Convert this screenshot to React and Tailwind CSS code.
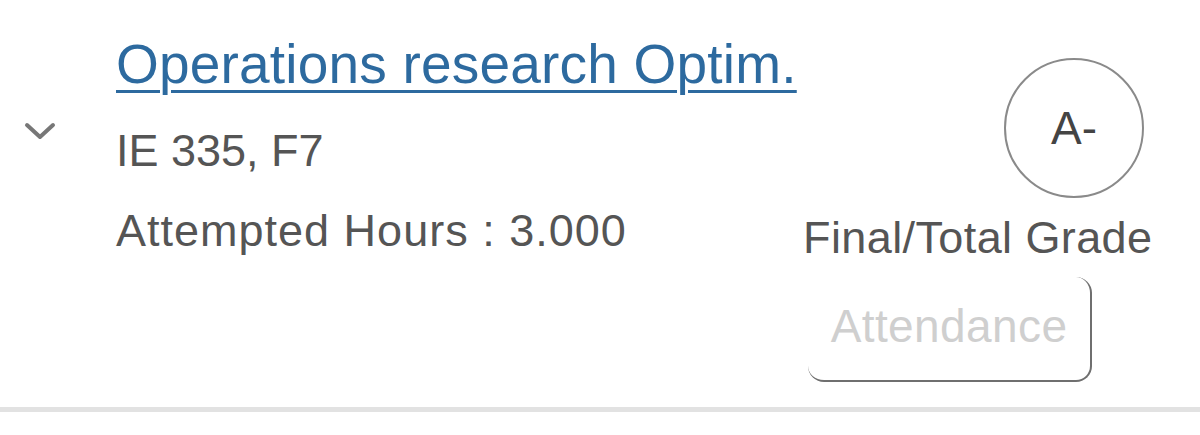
import React from 'react';

const font = { fontFamily: '"Liberation Sans", Arial, Helvetica, sans-serif' };

function Chevron() {
  return (
    <svg width="32" height="18" viewBox="0 0 32 18" className="ml-[24px] mt-[122px]">
      <polyline
        points="3,3 16,15 29,3"
        fill="none"
        stroke="#777777"
        strokeWidth="4"
        strokeLinecap="round"
        strokeLinejoin="round"
      />
    </svg>
  );
}

export default function App() {
  return (
    <div className="w-[1200px] h-[435px] bg-white overflow-hidden" style={font}>
      <div className="flex items-start h-[407px]">
        {/* expand toggle */}
        <div className="w-[116px] shrink-0">
          <Chevron />
        </div>

        {/* course info */}
        <div className="flex-1 mt-[32px] whitespace-nowrap">
          <a href="#" className="block text-[55px] leading-[64px] tracking-[0.2px] text-[#2d6a9f] underline decoration-[3px] underline-offset-[7px]">
            Operations research Optim.
          </a>
          <div className="mt-[25px] text-[45px] leading-[60px] text-[#555555]">IE 335, F7</div>
          <div className="mt-[20px] text-[45px] leading-[60px] tracking-[1px] text-[#555555]">Attempted Hours : 3.000</div>
        </div>

        {/* grade + attendance */}
        <div className="w-[349px] shrink-0 mr-[48px] mt-[58px] flex flex-col items-start whitespace-nowrap">
          <div className="ml-[201px] w-[140px] h-[140px] rounded-full border-2 border-[#8a8a8a] flex items-center justify-center text-[46px] leading-none text-[#444444]">
            A-
          </div>
          <div className="mt-[10px] text-[45px] leading-[60px] tracking-[0.4px] text-[#555555]">Final/Total Grade</div>
          <button
            type="button"
            className="ml-[5px] mt-[9px] w-[284px] pt-[19px] pb-[24px] border-r-2 border-b-2 border-[#6f6f6f] rounded-[16px] text-center text-[46px] leading-[60px] tracking-[0.4px] text-[#cfcfcf]"
          >
            Attendance
          </button>
        </div>
      </div>
      <div className="h-[5px] bg-[#e2e2e2]" />
    </div>
  );
}
